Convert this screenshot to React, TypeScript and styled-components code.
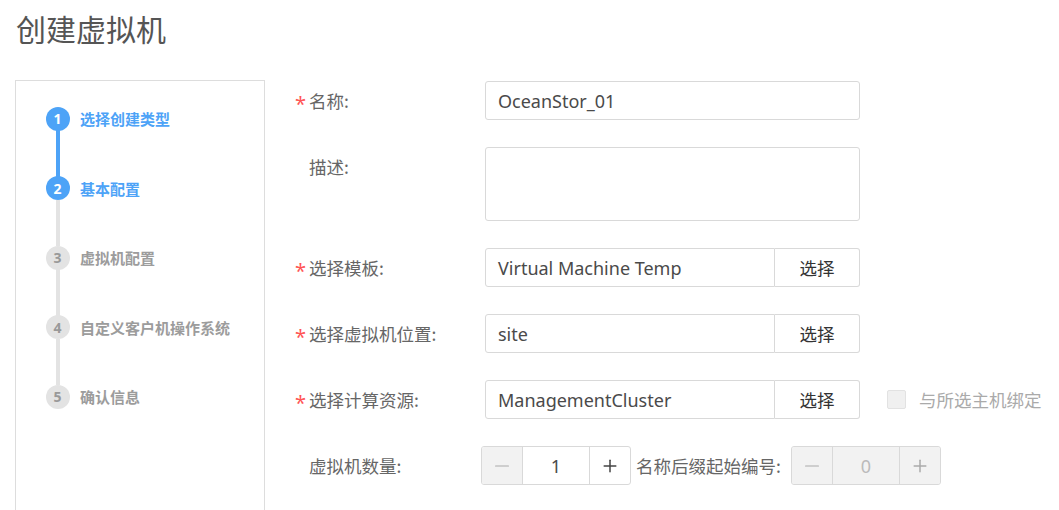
import React from 'react'
import styled, { createGlobalStyle, css } from 'styled-components'
import { Minus, Plus } from 'lucide-react'

const GlobalStyle = createGlobalStyle`
  html, body {
    margin: 0;
    padding: 0;
    background: #fff;
    font-family: "Noto Sans", "Noto Sans CJK SC", sans-serif;
  }
  * { box-sizing: border-box; }
`

const BLUE = '#4da3f7'
const GREY = '#e3e3e3'
const CJK = '"Noto Sans CJK SC", sans-serif'

const Page = styled.div`
  width: 1059px;
  height: 510px;
  overflow: hidden;
  padding-left: 15px;
`

const Title = styled.h1`
  margin: 0;
  height: 56px;
  line-height: 56px;
  padding-left: 1px;
  font-size: 30px;
  font-weight: normal;
  color: #555;
  font-family: ${CJK};
`

const Main = styled.div`
  display: flex;
  margin-top: 24px;
`

const Sidebar = styled.div`
  width: 250px;
  height: 460px;
  border: 1px solid #ddd;
  padding: 26px 0 0 30px;
  display: flex;
  flex-direction: column;
`

const StepRow = styled.div`
  display: flex;
  align-items: center;
  height: 23px;
`

const Circle = styled.div<{ $active: boolean }>`
  width: 24px;
  height: 24px;
  margin: -0.5px;
  border-radius: 50%;
  flex: none;
  display: flex;
  align-items: center;
  justify-content: center;
  font-size: 14px;
  font-weight: bold;
  font-family: "Open Sans", sans-serif;
  background: ${({ $active }) => ($active ? BLUE : GREY)};
  color: ${({ $active }) => ($active ? '#fff' : '#999')};
`

const StepLabel = styled.span<{ $active: boolean }>`
  margin-left: 11px;
  font-size: 15px;
  font-weight: bold;
  font-family: ${CJK};
  color: ${({ $active }) => ($active ? BLUE : '#9c9c9c')};
`

const Connector = styled.div<{ $active: boolean }>`
  width: 4px;
  height: 46.5px;
  margin-left: 9.5px;
  background: ${({ $active }) => ($active ? BLUE : GREY)};
`

const Form = styled.div`
  margin-left: 30px;
  padding-top: 1px;
  display: grid;
  grid-template-columns: 190px auto;
  row-gap: 27px;
  align-content: start;
`

const Label = styled.div`
  line-height: 39px;
  font-size: 17.5px;
  color: #666;
  font-family: ${CJK};
  display: flex;
  align-items: flex-start;
  white-space: nowrap;
`

const Star = styled.span<{ $show: boolean }>`
  width: 14px;
  flex: none;
  margin-top: 13px;
  line-height: 1;
  color: #f55;
  font-size: 20px;
  font-family: "Noto Sans", sans-serif;
  visibility: ${({ $show }) => ($show ? 'visible' : 'hidden')};
`

const Field = styled.div<{ $shift?: number }>`
  display: flex;
  align-items: center;
  margin-left: ${({ $shift }) => $shift ?? 0}px;
`

const boxBorder = css`
  border: 1px solid #d9d9d9;
  border-radius: 3px;
  background: #fff;
`

const TextInput = styled.div<{ $w: number; $joined?: boolean }>`
  ${boxBorder}
  width: ${({ $w }) => $w}px;
  height: 39px;
  padding: 0 12px;
  display: flex;
  align-items: center;
  font-size: 18px;
  color: #4a4a4a;
  white-space: nowrap;
  overflow: hidden;
  ${({ $joined }) => $joined && css`
    border-top-right-radius: 0;
    border-bottom-right-radius: 0;
  `}
`

const TextArea = styled.div`
  ${boxBorder}
  width: 375px;
  height: 74px;
`

const PickButton = styled.div`
  ${boxBorder}
  border-left: none;
  border-top-left-radius: 0;
  border-bottom-left-radius: 0;
  width: 85px;
  height: 39px;
  display: flex;
  align-items: center;
  justify-content: center;
  font-size: 17.5px;
  color: #333;
  font-family: ${CJK};
`

const CheckGroup = styled.div`
  display: flex;
  align-items: center;
  margin-left: 27px;
`

const CheckBox = styled.div`
  width: 19px;
  height: 19px;
  border: 1px solid #e2e2e2;
  border-radius: 2px;
  background: #f0f0f0;
`

const CheckText = styled.span`
  margin-left: 13px;
  font-size: 17.5px;
  color: #aaa;
  font-family: ${CJK};
`

const Stepper = styled.div<{ $disabled?: boolean }>`
  ${boxBorder}
  display: flex;
  height: 39px;
  overflow: hidden;
  background: ${({ $disabled }) => ($disabled ? '#f2f2f2' : '#fff')};
`

const StepBtn = styled.div<{ $dim: boolean; $first?: boolean }>`
  width: 41px;
  display: flex;
  align-items: center;
  justify-content: center;
  background: ${({ $dim }) => ($dim ? '#f2f2f2' : 'transparent')};
  color: ${({ $dim }) => ($dim ? '#aaa' : '#444')};
  ${({ $first }) => ($first ? 'border-right' : 'border-left')}: 1px solid #d9d9d9;
`

const StepValue = styled.div<{ $dim: boolean }>`
  width: 66px;
  display: flex;
  align-items: center;
  justify-content: center;
  font-size: 18px;
  color: ${({ $dim }) => ($dim ? '#bbb' : '#4a4a4a')};
`

const InlineLabel = styled.span`
  margin: 0 10px 0 5px;
  font-size: 17.5px;
  color: #666;
  font-family: ${CJK};
`

const steps = ['选择创建类型', '基本配置', '虚拟机配置', '自定义客户机操作系统', '确认信息']
const current = 2

const NumberStepper = ({ value, disabled }: { value: number; disabled?: boolean }) => (
  <Stepper $disabled={disabled}>
    <StepBtn $dim $first>
      <Minus size={22} strokeWidth={1.3} />
    </StepBtn>
    <StepValue $dim={!!disabled}>{value}</StepValue>
    <StepBtn $dim={!!disabled}>
      <Plus size={20} strokeWidth={1.8} />
    </StepBtn>
  </Stepper>
)

const App = () => (
  <Page>
    <GlobalStyle />
    <Title>创建虚拟机</Title>
    <Main>
      <Sidebar>
        {steps.map((s, i) => (
          <React.Fragment key={s}>
            <StepRow>
              <Circle $active={i < current}>{i + 1}</Circle>
              <StepLabel $active={i < current}>{s}</StepLabel>
            </StepRow>
            {i < steps.length - 1 && <Connector $active={i < current - 1} />}
          </React.Fragment>
        ))}
      </Sidebar>
      <Form>
        <Label><Star $show>*</Star>名称:</Label>
        <Field><TextInput $w={375}>OceanStor_01</TextInput></Field>

        <Label><Star $show={false}>*</Star>描述:</Label>
        <Field><TextArea /></Field>

        <Label><Star $show>*</Star>选择模板:</Label>
        <Field>
          <TextInput $w={290} $joined>Virtual Machine Temp</TextInput>
          <PickButton>选择</PickButton>
        </Field>

        <Label><Star $show>*</Star>选择虚拟机位置:</Label>
        <Field>
          <TextInput $w={290} $joined>site</TextInput>
          <PickButton>选择</PickButton>
        </Field>

        <Label><Star $show>*</Star>选择计算资源:</Label>
        <Field>
          <TextInput $w={290} $joined>ManagementCluster</TextInput>
          <PickButton>选择</PickButton>
          <CheckGroup>
            <CheckBox />
            <CheckText>与所选主机绑定</CheckText>
          </CheckGroup>
        </Field>

        <Label><Star $show={false}>*</Star>虚拟机数量:</Label>
        <Field $shift={-4}>
          <NumberStepper value={1} />
          <InlineLabel>名称后缀起始编号:</InlineLabel>
          <NumberStepper value={0} disabled />
        </Field>
      </Form>
    </Main>
  </Page>
)

export default App
